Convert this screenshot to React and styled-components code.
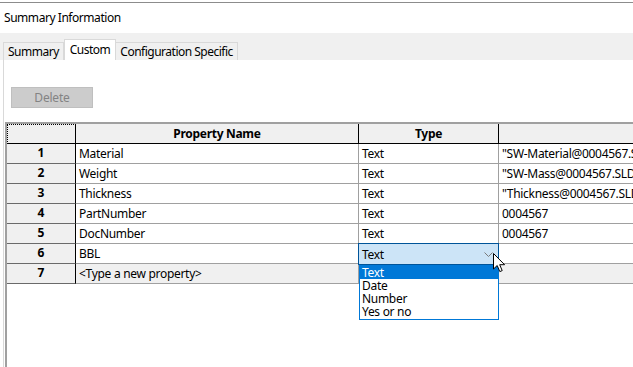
import React from "react";
import styled, { createGlobalStyle } from "styled-components";

const rows = [
  { name: "Material", type: "Text", value: '"SW-Material@0004567.SLDPRT"' },
  { name: "Weight", type: "Text", value: '"SW-Mass@0004567.SLDPRT"' },
  { name: "Thickness", type: "Text", value: '"Thickness@0004567.SLDPRT"' },
  { name: "PartNumber", type: "Text", value: "0004567" },
  { name: "DocNumber", type: "Text", value: "0004567" },
  { name: "BBL", type: "Text", value: "", editing: true },
  { name: "<Type a new property>", type: "", value: "", placeholder: true },
];

const typeOptions = ["Text", "Date", "Number", "Yes or no"];

function App() {
  return (
    <>
      <GlobalStyle />
      <StyledWindow>
        <StyledTitle>Summary Information</StyledTitle>
        <StyledTabStrip>
          <StyledTab>Summary</StyledTab>
          <StyledTab active>Custom</StyledTab>
          <StyledTab>Configuration Specific</StyledTab>
        </StyledTabStrip>
        <StyledPanel>
          <StyledToolbar>
            <StyledDeleteBtn disabled>Delete</StyledDeleteBtn>
          </StyledToolbar>
          <StyledGrid>
            <StyledRow>
              <StyledCorner />
              <StyledHeadCell>Property Name</StyledHeadCell>
              <StyledHeadCell>Type</StyledHeadCell>
              <StyledHeadCell last></StyledHeadCell>
            </StyledRow>
            {rows.map((row, i) => (
              <StyledRow key={i}>
                <StyledRowHead>{i + 1}</StyledRowHead>
                <StyledCell shaded={row.placeholder}>{row.name}</StyledCell>
                <StyledCell shaded={row.placeholder}>
                  {row.editing ? (
                    <StyledCombo>
                      <span>{row.type}</span>
                      <svg width="9" height="5" viewBox="0 0 9 5">
                        <path d="M0.5 0.5 L4.5 4.5 L8.5 0.5" fill="none" stroke="#7a7a7a" strokeWidth="1" />
                      </svg>
                      <StyledList>
                        {typeOptions.map((opt, j) => (
                          <StyledOption key={opt} selected={j === 0}>
                            {opt}
                          </StyledOption>
                        ))}
                      </StyledList>
                      <StyledCursor width="13" height="20" viewBox="0 0 13 20">
                        <path
                          d="M0.5 0.5 L0.5 16 L4.2 12.5 L6.8 18.6 L9.2 17.6 L6.7 11.7 L11.6 11.7 Z"
                          fill="#fff"
                          stroke="#000"
                          strokeWidth="1"
                          strokeLinejoin="miter"
                        />
                      </StyledCursor>
                    </StyledCombo>
                  ) : (
                    row.type
                  )}
                </StyledCell>
                <StyledCell shaded={row.placeholder} last>
                  {row.value}
                </StyledCell>
              </StyledRow>
            ))}
          </StyledGrid>
        </StyledPanel>
      </StyledWindow>
    </>
  );
}

export default App;

const GlobalStyle = createGlobalStyle`
  html, body {
    margin: 0;
    padding: 0;
    background: #ffffff;
  }
  body {
    font-family: "Noto Sans", "Open Sans", sans-serif;
    font-size: 12px;
    color: #000000;
    overflow: hidden;
  }
`;

const StyledWindow = styled.div`
  box-sizing: border-box;
  width: 633px;
  margin-top: 2px;
  height: 365px;
  border-top: 1px solid #8c8c8c;
  display: flex;
  flex-direction: column;
  overflow: hidden;
`;

const StyledTitle = styled.div`
  height: 30px;
  line-height: 30px;
  padding-left: 4px;
  font-size: 12px;
  letter-spacing: -0.45px;
`;

const StyledTabStrip = styled.div`
  height: 27px;
  background: #f0f0f0;
  display: flex;
  align-items: flex-end;
  padding-left: 3px;
`;

const StyledTab = styled.div`
  box-sizing: border-box;
  height: ${({ active }) => (active ? "21px" : "18px")};
  line-height: ${({ active }) => (active ? "19px" : "17px")};
  padding: 0 ${({ active }) => (active ? "5px" : "4px")};
  background: ${({ active }) => (active ? "#ffffff" : "#f0f0f0")};
  border: 1px solid #d9d9d9;
  border-bottom: none;
  border-left: ${({ active }) => (active ? "1px solid #d9d9d9" : "none")};
  font-size: 12px;
  letter-spacing: -0.5px;
  &:first-child {
    border-left: 1px solid #d9d9d9;
  }
`;

const StyledPanel = styled.div`
  flex: 1;
  margin-left: 3px;
  border-left: 1px solid #d9d9d9;
  background: #ffffff;
  display: flex;
  flex-direction: column;
`;

const StyledToolbar = styled.div`
  padding: 27px 0 14px 7px;
`;

const StyledDeleteBtn = styled.button`
  box-sizing: border-box;
  width: 82px;
  height: 21px;
  background: #cccccc;
  border: 1px solid #bfbfbf;
  color: #838383;
  font-family: inherit;
  font-size: 12px;
  letter-spacing: -0.2px;
  padding: 0;
`;

const StyledGrid = styled.div`
  flex: 1;
  margin-left: 1px;
  border-left: 2px solid #a0a0a0;
  border-top: 2px solid #a0a0a0;
`;

const StyledRow = styled.div`
  display: grid;
  grid-template-columns: 69px 283px 140px 1fr;
  height: 20px;
`;

const StyledCorner = styled.div`
  box-sizing: border-box;
  background: #f0f0f0;
  border: 1px dotted #000000;
  border-right: 1px solid #000000;
  border-bottom: 1px solid #000000;
`;

const StyledHeadCell = styled.div`
  box-sizing: border-box;
  background: #f0f0f0;
  border-right: ${({ last }) => (last ? "none" : "1px solid #000000")};
  border-bottom: 1px solid #000000;
  text-align: center;
  font-weight: bold;
  line-height: 19px;
  letter-spacing: -0.3px;
`;

const StyledRowHead = styled.div`
  box-sizing: border-box;
  background: #f0f0f0;
  border-right: 1px solid #000000;
  border-bottom: 1px solid #6a6a6a;
  text-align: center;
  font-weight: bold;
  line-height: 18px;
`;

const StyledCell = styled.div`
  box-sizing: border-box;
  position: relative;
  background: ${({ shaded }) => (shaded ? "#f0f0f0" : "#ffffff")};
  border-right: ${({ last }) => (last ? "none" : "1px solid #a0a0a0")};
  border-bottom: 1px solid #a0a0a0;
  padding-left: 3px;
  line-height: 19px;
  white-space: nowrap;
  overflow: ${({ last }) => (last ? "hidden" : "visible")};
  letter-spacing: -0.3px;
`;

const StyledCombo = styled.div`
  box-sizing: border-box;
  position: absolute;
  left: -1px;
  top: -1px;
  width: 141px;
  height: 22px;
  background: #cce4f7;
  border: 1px solid #005499;
  display: flex;
  align-items: center;
  justify-content: space-between;
  padding: 0 5px 0 3px;
  z-index: 2;
  svg {
    margin-top: 1px;
  }
`;

const StyledList = styled.div`
  box-sizing: border-box;
  position: absolute;
  left: 0;
  top: 21px;
  width: 140px;
  background: #ffffff;
  border: 1px solid #0078d7;
  padding-bottom: 1px;
`;

const StyledOption = styled.div`
  height: 13px;
  line-height: 13px;
  padding-left: 2px;
  background: ${({ selected }) => (selected ? "#0078d7" : "transparent")};
  color: ${({ selected }) => (selected ? "#ffffff" : "#000000")};
`;

const StyledCursor = styled.svg`
  position: absolute;
  left: 134px;
  top: 8px;
`;
